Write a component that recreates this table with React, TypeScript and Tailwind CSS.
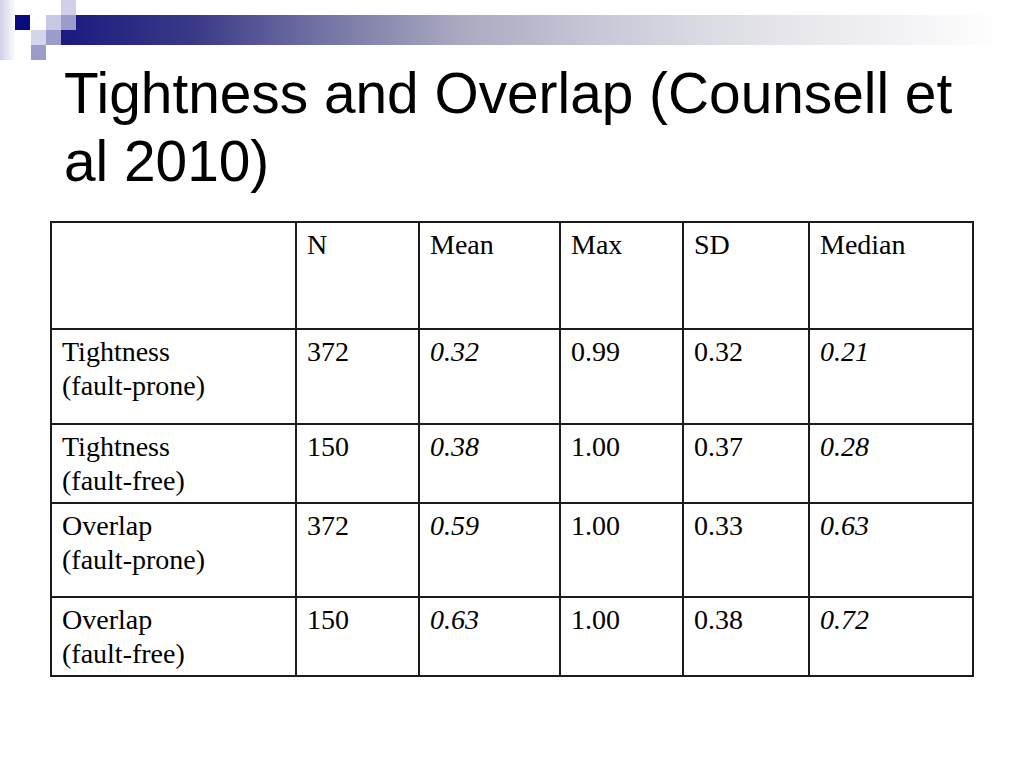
import React from 'react';

type Row = { label: string[]; n: string; mean: string; max: string; sd: string; median: string; h: string };

const rows: Row[] = [
  { label: ['Tightness', '(fault-prone)'], n: '372', mean: '0.32', max: '0.99', sd: '0.32', median: '0.21', h: 'h-[95px]' },
  { label: ['Tightness', '(fault-free)'], n: '150', mean: '0.38', max: '1.00', sd: '0.37', median: '0.28', h: 'h-[79px]' },
  { label: ['Overlap', '(fault-prone)'], n: '372', mean: '0.59', max: '1.00', sd: '0.33', median: '0.63', h: 'h-[94px]' },
  { label: ['Overlap', '(fault-free)'], n: '150', mean: '0.63', max: '1.00', sd: '0.38', median: '0.72', h: 'h-[79px]' },
];

const cell = 'border-r-2 border-b-2 border-[#1c1c1c] pl-[10px] pt-[5px]';

// slide header: squares + fading bar
const Banner = () => (
  <svg width="1024" height="60" viewBox="0 0 1024 60" className="block">
    <defs>
      <linearGradient id="bar" x1="0" x2="1" y1="0" y2="0">
        <stop offset="0%" stopColor="#1a1a80" />
        <stop offset="14%" stopColor="#3a3a88" />
        <stop offset="25%" stopColor="#6a6aa0" />
        <stop offset="41%" stopColor="#a8a8c0" />
        <stop offset="56%" stopColor="#c8c8d8" />
        <stop offset="68%" stopColor="#dcdce4" />
        <stop offset="81%" stopColor="#ececf0" />
        <stop offset="98%" stopColor="#ffffff" />
      </linearGradient>
      <linearGradient id="fade" x1="0" x2="1" y1="0" y2="0">
        <stop offset="0%" stopColor="#cfcfe6" />
        <stop offset="100%" stopColor="#ffffff" />
      </linearGradient>
    </defs>
    <rect x="0" y="0" width="16" height="60" fill="url(#fade)" />
    <rect x="61" y="15" width="963" height="30" fill="url(#bar)" />
    <rect x="15" y="15" width="15" height="15" fill="#0a0a80" />
    <rect x="46" y="15" width="15" height="15" fill="#c8c8e4" />
    <rect x="61" y="0" width="15" height="15" fill="#d0d0e8" />
    <rect x="61" y="15" width="15" height="15" fill="#9c9ccc" />
    <rect x="31" y="30" width="15" height="15" fill="#d4d4ea" />
    <rect x="46" y="30" width="15" height="15" fill="#9c9ccc" />
    <rect x="31" y="45" width="15" height="15" fill="#9c9ccc" />
  </svg>
);

const App = () => {
  return (
    <div className="w-[1024px] h-[768px] bg-white overflow-hidden text-black">
      <Banner />
      <h1 className="ml-[64px] text-[56.8px] leading-[68px] font-normal" style={{ fontFamily: '"Liberation Sans", Arial, sans-serif' }}>
        Tightness and Overlap (Counsell et
        <br />
        al 2010)
      </h1>

      <div
        className="mt-[25px] ml-[50px] w-[924px] grid grid-cols-[245px_123px_141px_123px_126px_164px] border-l-2 border-t-2 border-[#1c1c1c] text-[28px] leading-[33.6px]"
        style={{ fontFamily: '"Liberation Serif", "Times New Roman", serif' }}
      >
        <div className={`${cell} h-[107px]`}></div>
        <div className={`${cell} h-[107px]`}>N</div>
        <div className={`${cell} h-[107px]`}>Mean</div>
        <div className={`${cell} h-[107px]`}>Max</div>
        <div className={`${cell} h-[107px]`}>SD</div>
        <div className={`${cell} h-[107px]`}>Median</div>

        {rows.map((r) => (
          <React.Fragment key={r.label.join(' ') + r.n}>
            <div className={`${cell} ${r.h}`}>
              {r.label[0]}
              <br />
              {r.label[1]}
            </div>
            <div className={`${cell} ${r.h}`}>{r.n}</div>
            <div className={`${cell} ${r.h} italic`}>{r.mean}</div>
            <div className={`${cell} ${r.h}`}>{r.max}</div>
            <div className={`${cell} ${r.h}`}>{r.sd}</div>
            <div className={`${cell} ${r.h} italic`}>{r.median}</div>
          </React.Fragment>
        ))}
      </div>
    </div>
  );
};

export default App;
